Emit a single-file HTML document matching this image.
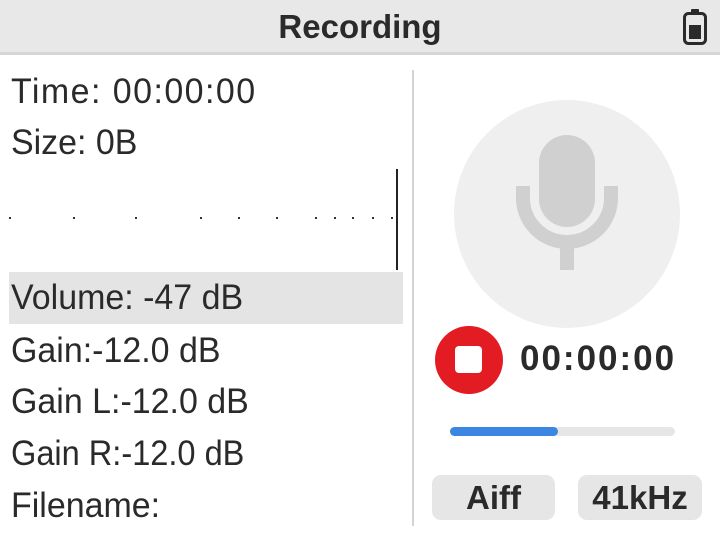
<!DOCTYPE html>
<html><head><style>
*{margin:0;padding:0;box-sizing:border-box}
body{width:720px;height:540px;background:#fff;font-family:"Liberation Sans",sans-serif;color:#2a2a2a;position:relative;overflow:hidden}
.hdr{position:absolute;left:0;top:0;width:720px;height:55px;background:#e8e8e8;border-bottom:3px solid #d6d6d6}
.title{position:absolute;left:0;width:720px;top:8px;text-align:center;font-size:33px;font-weight:bold;color:#2a2a2a}
.t{position:absolute;left:11px;font-size:35px;line-height:40px;white-space:nowrap;transform:scaleX(0.97);transform-origin:left}
.hl{position:absolute;left:9px;top:272px;width:394px;height:52px;background:#e4e4e4}
.div{position:absolute;left:412px;top:70px;width:2px;height:456px;background:#d4d4d4}
.btn{position:absolute;top:475px;height:45px;background:#e6e6e6;border-radius:9px;font-weight:bold;font-size:33px;text-align:center;line-height:45px}
</style></head><body>
<div class="hdr"><div class="title">Recording</div>
<svg style="position:absolute;left:682px;top:9px" width="26" height="36" viewBox="0 0 26 36"><rect x="9" y="0" width="8" height="5" rx="1" fill="#2a2a2a"/><rect x="2.5" y="4.5" width="21" height="30" rx="4" fill="none" stroke="#2a2a2a" stroke-width="3"/><rect x="7" y="16" width="12" height="14" fill="#2a2a2a"/></svg>
</div>
<div class="t" style="top:72px;letter-spacing:1.5px">Time: 00:00:00</div>
<div class="t" style="top:123px">Size: 0B</div>
<svg style="position:absolute;left:0;top:165px" width="410" height="110">
<g fill="#333"><rect x="9" y="52" width="2" height="2"/><rect x="73" y="52" width="2" height="2"/><rect x="135" y="52" width="2" height="2"/><rect x="200" y="52" width="2" height="2"/><rect x="238" y="52" width="2" height="2"/><rect x="276" y="52" width="2" height="2"/><rect x="315" y="52" width="2" height="2"/><rect x="334" y="52" width="2" height="2"/><rect x="352" y="52" width="2" height="2"/><rect x="372" y="52" width="2" height="2"/><rect x="391" y="52" width="2" height="2"/></g>
<rect x="396" y="4" width="2" height="101" fill="#222"/></svg>
<div class="hl"></div>
<div class="t" style="top:278px">Volume: -47 dB</div>
<div class="t" style="top:331px">Gain:-12.0 dB</div>
<div class="t" style="top:382px">Gain L:-12.0 dB</div>
<div class="t" style="top:434px;transform:scaleX(0.93)">Gain R:-12.0 dB</div>
<div class="t" style="top:486px">Filename:</div>
<div class="div"></div>
<svg style="position:absolute;left:452px;top:98px" width="230" height="230"><ellipse cx="115" cy="116" rx="113" ry="114" fill="#efefef"/>
<rect x="87" y="37" width="56" height="92" rx="28" fill="#d0d0d0"/>
<path d="M71 88 V100 A44 44 0 0 0 159 100 V88" fill="none" stroke="#d0d0d0" stroke-width="14"/>
<rect x="108" y="145" width="14" height="27" fill="#d0d0d0"/></svg>
<svg style="position:absolute;left:435px;top:326px" width="70" height="70"><circle cx="34" cy="34" r="34" fill="#e31b23"/><rect x="20" y="20" width="27" height="27" rx="4" fill="#fff"/></svg>
<div style="position:absolute;left:520px;top:339px;font-size:35px;font-weight:bold;white-space:nowrap;letter-spacing:2px">00:00:00</div>
<div style="position:absolute;left:450px;top:427px;width:225px;height:9px;border-radius:5px;background:#e6e6e6"><div style="width:108px;height:9px;border-radius:5px;background:#3b86e0"></div></div>
<div class="btn" style="left:432px;width:123px">Aiff</div>
<div class="btn" style="left:578px;width:124px">41kHz</div>
</body></html>
